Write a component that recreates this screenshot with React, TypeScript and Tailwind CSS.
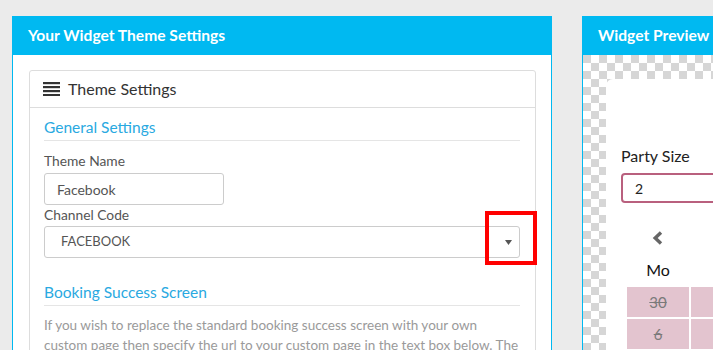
function MenuIcon() {
  return (
    <svg width="17" height="14" viewBox="0 0 17 14" className="shrink-0">
      <rect x="0" y="0" width="17" height="2.2" fill="#333" />
      <rect x="0" y="4" width="17" height="2.2" fill="#333" />
      <rect x="0" y="8" width="17" height="2.2" fill="#333" />
      <rect x="0" y="12" width="17" height="2.2" fill="#333" />
    </svg>
  );
}

function ThemeSettingsPanel() {
  return (
    <div className="w-[540px] shrink-0">
      <div className="h-[39px] bg-[#00b9f1] pl-4 flex items-center">
        <h2 className="text-[15.6px] font-bold text-white">Your Widget Theme Settings</h2>
      </div>
      <div className="border-x border-[#00b9f1] bg-white pl-4 pr-[15px] pt-[15px] h-[400px]">
        <div className="border border-[#dddddd] rounded-t-[3px] h-full">
          <div className="h-[37px] border-b border-[#dddddd] pl-[13px] flex items-center gap-2">
            <MenuIcon />
            <span className="text-[16px] text-[#333]">Theme Settings</span>
          </div>
          <div className="pl-[14px] pr-[15px]">
            <h3 className="mt-[9px] text-[15.5px] leading-[21px] text-[#29a9e1] pb-[2px] border-b border-[#e5e5e5]">
              General Settings
            </h3>
            <label className="block mt-[11px] text-[13.8px] leading-[18px] text-[#555]">Theme Name</label>
            <div className="mt-[3px] w-[180px] h-[32px] border border-[#cccccc] rounded-[3px] pl-3 flex items-center text-[14px] text-[#555]">
              Facebook
            </div>
            <label className="block mt-[1px] text-[13.8px] leading-[18px] text-[#555]">Channel Code</label>
            <div className="mt-[2px] h-[32px] border border-[#cccccc] rounded-[3px] pl-4 pr-[7px] flex items-center justify-between text-[13px] text-[#555]">
              <span>FACEBOOK</span>
              <svg width="7" height="5" viewBox="0 0 7 5">
                <path d="M0 0 L7 0 L3.5 5 Z" fill="#555" />
              </svg>
            </div>
            <h3 className="mt-[24px] text-[15.5px] leading-[21px] text-[#29a9e1] pb-[2px] border-b border-[#e5e5e5]">
              Booking Success Screen
            </h3>
            <p className="mt-[9px] text-[13.5px] leading-[20px] text-[#9a9a9a]">
              If you wish to replace the standard booking success screen with your own custom page then specify the url to your custom page in the text box below. The
            </p>
          </div>
        </div>
      </div>
    </div>
  );
}

function Cell({ day }: { day: string }) {
  return (
    <div className="h-[30px] bg-[#e3c4cf] flex items-center justify-center text-[15px] text-[#7a7a7a] line-through">
      {day}
    </div>
  );
}

function PreviewPanel() {
  return (
    <div className="w-[300px] shrink-0">
      <div className="h-[39px] bg-[#00b9f1] pl-[16px] flex items-center">
        <h2 className="text-[15.6px] font-bold text-white">Widget Preview</h2>
      </div>
      <div className="border-l border-[#00b9f1] h-[400px] pt-[24px] pl-[23px] bg-[conic-gradient(#fff_0_25%,#d6d6d6_0_50%,#fff_0_75%,#d6d6d6_0)] bg-[length:16px_16px]">
        <div className="bg-white rounded-tl-[7px] h-full pl-[15px] pt-[66px]">
          <div className="text-[16px] leading-[22px] text-[#222]">Party Size</div>
          <div className="mt-[6px] h-[30px] border-2 border-[#b9607e] rounded-[4px] pl-3 flex items-center text-[14px] text-[#222]">
            2
          </div>
          <div className="ml-[6px] mt-[28px] grid grid-cols-[62px_62px_62px] gap-[2px]">
            <div className="flex justify-center pr-[2px]">
              <svg width="11" height="14" viewBox="0 0 11 14">
                <polyline points="9,1.5 3.2,7 9,12.5" fill="none" stroke="#666" strokeWidth="3.4" />
              </svg>
            </div>
            <div />
            <div />
            <div className="mt-[12px] mb-[4px] text-center text-[16px] leading-[22px] text-[#111]">Mo</div>
            <div />
            <div />
            <Cell day="30" />
            <Cell day="" />
            <Cell day="" />
            <Cell day="6" />
            <Cell day="" />
            <Cell day="" />
          </div>
        </div>
      </div>
    </div>
  );
}

export default function App() {
  return (
    <div className="relative w-[713px] h-[350px] overflow-hidden bg-[#ebebeb] pt-4 pl-3 flex gap-[30px] font-['Lato',sans-serif]">
      <ThemeSettingsPanel />
      <PreviewPanel />
      <div className="absolute left-[485px] top-[211px] w-[52px] h-[54px] border-4 border-[#ff0000]" />
    </div>
  );
}
